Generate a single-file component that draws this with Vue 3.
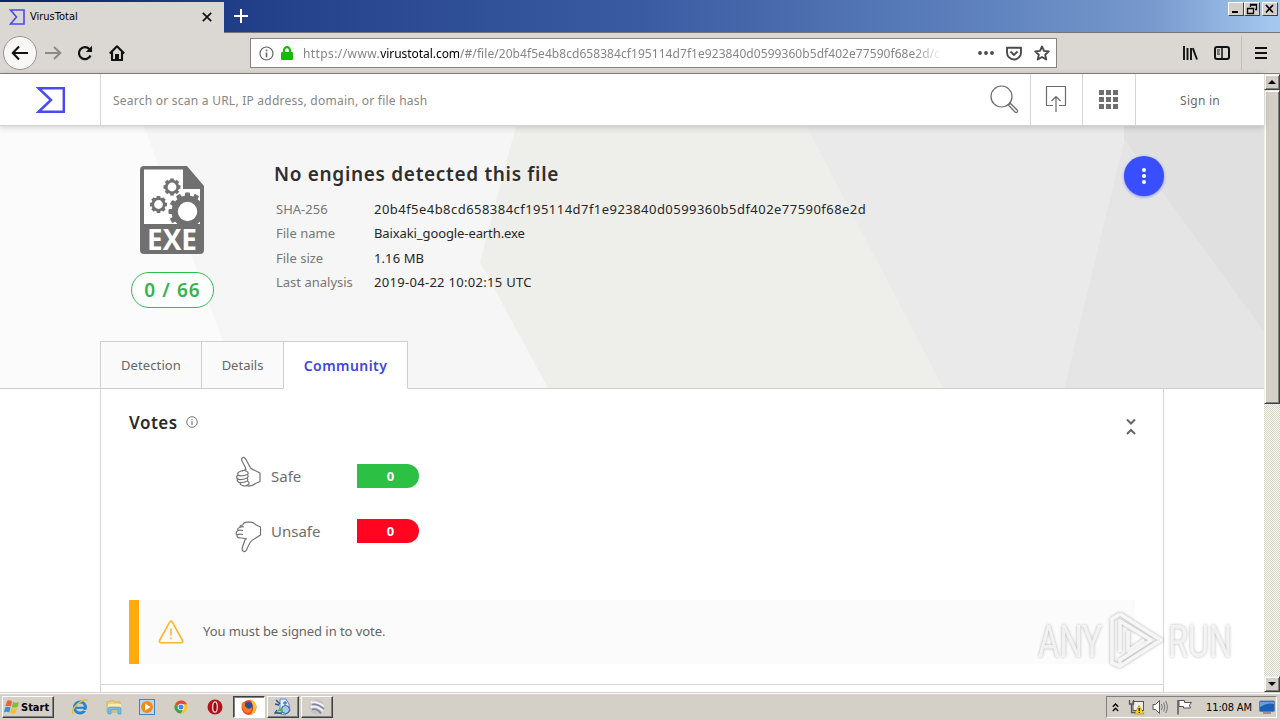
<script setup>
import { ref } from "vue";

const details = ref([
  {
    label: "SHA-256",
    value: "20b4f5e4b8cd658384cf195114d7f1e923840d0599360b5df402e77590f68e2d",
    kind: "hash",
  },
  { label: "File name", value: "Baixaki_google-earth.exe", kind: "name" },
  { label: "File size", value: "1.16 MB", kind: "size" },
  { label: "Last analysis", value: "2019-04-22 10:02:15 UTC", kind: "date" },
]);

const tabs = ref(["Detection", "Details", "Community"]);
const activeTab = ref("Community");

// teeth of the gears on the file icon
const teeth = [0, 45, 90, 135, 180, 225, 270, 315];
const bigTeeth = [0, 30, 60, 90, 120, 150, 180, 210, 240, 270, 300, 330];
const gears = [
  { x: 32, y: 21 },
  { x: 18.5, y: 38.5 },
];
</script>

<template>
  <div class="screen">
    <div class="titlebar">
      <div class="browser-tab">
        <svg class="favicon" width="16" height="16" viewBox="0 0 16 16">
          <path d="M1.5 1H15V15H1.5L7.500 8Z" fill="none" stroke="#4a4af0" stroke-width="1.6" />
        </svg>
        <span class="tab-title">VirusTotal</span>
        <svg class="tab-close" width="10" height="10" viewBox="0 0 10 10">
          <path d="M.8.8 9.200 9.200M9.200.8.8 9.200" stroke="#111" stroke-width="1.700" />
        </svg>
      </div>
      <svg class="new-tab" width="14" height="14" viewBox="0 0 14 14">
        <path d="M7 0V14M0 7H14" stroke="#fff" stroke-width="2" />
      </svg>
      <div class="win-buttons">
        <div class="win-btn"><svg width="14" height="12"><path d="M3 9H9" stroke="#000" stroke-width="2" /></svg></div>
        <div class="win-btn restore"><svg width="14" height="12"><path d="M5.500 4V1.500H11.500V6.500H10M5 2H12M2.500 5.500H8.500V10.500H2.500ZM2 5.500H9" fill="none" stroke="#000" stroke-width="1.300" /></svg></div>
        <div class="win-btn"><svg width="14" height="12"><path d="M3 2 10 9.500M10 2 3 9.500" stroke="#000" stroke-width="1.700" /></svg></div>
      </div>
    </div>

    <div class="toolbar">
      <div class="nav-back">
        <svg width="18" height="16" viewBox="0 0 18 16"><path d="M17 8H2M8 1.500 1.800 8 8 14.500" fill="none" stroke="#111" stroke-width="2.100" /></svg>
      </div>
      <svg class="nav-forward" width="17" height="14" viewBox="0 0 17 14"><path d="M0 7H15M9 1 15.300 7 9 13" fill="none" stroke="#8c8a86" stroke-width="2" /></svg>
      <svg class="nav-reload" width="16" height="16" viewBox="0 0 16 16"><path d="M13.500 10.500A6 6 0 1 1 12.500 4.200" fill="none" stroke="#111" stroke-width="2.200" /><path d="M15 .8V7H8.800Z" fill="#111" /></svg>
      <svg class="nav-home" width="16" height="16" viewBox="0 0 16 16"><path d="M.8 8.500 8 1.300 15.200 8.500M3 7V15H13V7" fill="none" stroke="#111" stroke-width="2.100" stroke-linejoin="round" /><path d="M6 9H10V15H6Z" fill="#111" /></svg>
      <div class="urlbar">
        <svg width="15" height="15" viewBox="0 0 15 15"><circle cx="7.500" cy="7.500" r="6.500" fill="none" stroke="#666" stroke-width="1.200" /><path d="M7.500 6.500V11.200M7.500 3.600V5.300" stroke="#666" stroke-width="1.600" /></svg>
        <svg class="lock" width="12" height="14" viewBox="0 0 12 14"><path d="M3 7V4.500A3 3.300 0 0 1 9 4.500V7" fill="none" stroke="#12bc00" stroke-width="2.200" /><rect x="0" y="6" width="12" height="8" rx="1.200" fill="#12bc00" /></svg>
        <span class="url"><i>https://www.</i><b>virustotal.com</b>/#/file/20b4f5e4b8cd658384cf195114d7f1e923840d0599360b5df402e77590f68e2d/c</span>
        <svg class="dots" width="16" height="4" viewBox="0 0 16 4"><circle cx="2" cy="2" r="1.900" /><circle cx="8" cy="2" r="1.900" /><circle cx="14" cy="2" r="1.900" /></svg>
        <svg class="pocket" width="16" height="15" viewBox="0 0 16 15"><path d="M1 1.800H15V6.500A7 7 0 0 1 1 6.500Z" fill="none" stroke="#4a4a4a" stroke-width="1.900" stroke-linejoin="round" /><path d="M4.500 5.500 8 9 11.500 5.500" fill="none" stroke="#4a4a4a" stroke-width="1.900" /></svg>
        <svg class="star" width="16" height="16" viewBox="0 0 16 16"><path d="M8 1.500 10 5.900 14.800 6.400 11.200 9.700 12.200 14.500 8 12 3.800 14.500 4.800 9.700 1.200 6.400 6 5.900Z" fill="none" stroke="#4a4a4a" stroke-width="1.900" stroke-linejoin="round" /></svg>
      </div>
      <svg class="library" width="15" height="14" viewBox="0 0 15 14"><path d="M1 0V14M4.500 2V14M8 2V14M9.800 2.200 14 13.500" stroke="#111" stroke-width="1.900" fill="none" /></svg>
      <svg class="sidebar-icon" width="16" height="14" viewBox="0 0 16 14"><rect x="1" y="1" width="14" height="12" rx="2" fill="none" stroke="#111" stroke-width="2" /><path d="M8 1V13" stroke="#111" stroke-width="1.500" /><path d="M3 4H6M3 6H5.500M3 8H6" stroke="#111" stroke-width="1" /></svg>
      <div class="toolbar-sep"></div>
      <svg class="menu-icon" width="12" height="12" viewBox="0 0 12 12"><path d="M0 1H12M0 6H12M0 11H12" stroke="#111" stroke-width="2" /></svg>
    </div>

    <div class="viewport">
      <div class="page">
        <header class="site-header">
          <div class="brand">
            <svg width="30" height="26" viewBox="0 0 30 26"><path d="M2.600 1.200H27.800V24.800H2.600L15 13Z" fill="none" stroke="#4a4af5" stroke-width="2.500" /></svg>
          </div>
          <div class="search">
            <span>Search or scan a URL, IP address, domain, or file hash</span>
            <svg width="29" height="29" viewBox="0 0 29 29" fill="none" stroke="#6a6a6a" stroke-width="1.200"><circle cx="11.500" cy="11.500" r="10.500" /><path d="M18.300 20 20.200 18.200 27.300 25.200Q28 26.500 27 27.200Q26 28 25 27Z" /></svg>
          </div>
          <div class="head-cell upload">
            <svg width="22" height="28" viewBox="0 0 22 28" fill="none" stroke="#6a6a6a" stroke-width="1.200"><path d="M8 20.500H1.500V1.500H20.500V20.500H14M11 27V11.500M6.500 16 11 11.500 15.500 16" /></svg>
          </div>
          <div class="head-cell apps">
            <div class="apps-grid"><i v-for="n in 9" :key="n"></i></div>
          </div>
          <div class="signin">Sign in</div>
        </header>

        <section class="hero">
          <svg class="hero-bg" width="1264" height="262" viewBox="0 0 1264 262">
            <rect width="1264" height="262" fill="#f6f6f6" />
            <path d="M0 0H144L240 262H0Z" fill="#fbfbfb" />
            <path d="M516 0H806L943 262H548L480 136Z" fill="#eeeeeb" />
            <path d="M806 0H1124V14L1064 262H943Z" fill="#eaeaea" />
            <path d="M1124 14 1264 206V262H1064Z" fill="#e5e5e5" />
            <path d="M1124 0H1264V206L1124 14Z" fill="#e0e0e0" />
          </svg>
          <div class="hero-content">
            <div class="summary">
              <div class="file-col">
                <svg class="file-icon" width="64" height="88" viewBox="0 0 64 88">
                  <path d="M4 0H47L64 20V84Q64 88 60 88H4Q0 88 0 84V4Q0 0 4 0Z" fill="#707070" />
                  <path d="M4 3.500H43V23H60V58H4Z" fill="#fff" />
                  <clipPath id="sheet"><rect x="4" y="26" width="58" height="34" /></clipPath>
                  <g clip-path="url(#sheet)" fill="#707070">
                    <g transform="translate(47.500 45.500)">
                      <circle r="16" />
                      <rect v-for="t in bigTeeth" :key="t" x="-2.500" y="-19" width="5" height="5" rx="1" :transform="`rotate(${t})`" />
                    </g>
                  </g>
                  <g v-for="g in gears" :key="g.x" :transform="`translate(${g.x} ${g.y})`">
                    <rect v-for="t in teeth" :key="t" x="-1.800" y="-8.500" width="3.600" height="4" fill="#707070" :transform="`rotate(${t})`" />
                    <circle r="5.800" fill="#fff" stroke="#707070" stroke-width="2.800" />
                  </g>
                  <circle cx="47.500" cy="45.500" r="9.700" fill="#fff" />
                  <text x="7" y="83.500" class="exe" textLength="50" lengthAdjust="spacingAndGlyphs">EXE</text>
                </svg>
                <div class="ratio">0 / 66</div>
              </div>
              <div class="info">
                <h1>No engines detected this file</h1>
                <dl>
                  <template v-for="row in details" :key="row.label">
                    <dt>{{ row.label }}</dt>
                    <dd :class="row.kind">{{ row.value }}</dd>
                  </template>
                </dl>
              </div>
              <div class="fab"><i></i><i></i><i></i></div>
            </div>
            <nav class="tabs">
              <div v-for="tab in tabs" :key="tab" class="tab" :class="[tab.toLowerCase(), { active: tab === activeTab }]">{{ tab }}</div>
            </nav>
          </div>
        </section>

        <section class="panel">
          <div class="panel-head">
            <h2>Votes</h2>
            <svg class="info-icon" width="12" height="12" viewBox="0 0 12 12"><circle cx="6" cy="6" r="5.300" fill="none" stroke="#777" /><path d="M6 5.200V9M6 3V4.200" stroke="#777" stroke-width="1.200" /></svg>
            <svg class="collapse" width="10" height="18" viewBox="0 0 10 18" fill="none" stroke="#666" stroke-width="2"><path d="M1 1.500 5 5.500 9 1.500M1 16 5 12 9 16" /></svg>
          </div>
          <div class="vote safe">
            <svg width="27" height="32" viewBox="0 0 27 32" fill="none" stroke="#737373" stroke-width="1.200" stroke-linejoin="round">
              <path d="M7 15 11 13.500Q10 10 7.500 6Q5.500 2.500 8 1.500Q9.500 1 11 3.500L15.500 12Q18 14 20 14.500L25 17V25.500L20.500 27.500Q17 30.500 12.500 30" />
              <path d="M12 15.500Q9 13.500 5 15.500Q2 16.500 3 19Q6 21 12.500 18.500Q14 16.500 12 15.500M3 19Q1 20 2 22.500Q5 25 12 22Q14 20.500 12.500 18.500M2.500 23Q1.500 25 4 26.500Q8 27 12.500 25Q13.500 23.500 12 22M5 26.800Q5 29 7.500 29.500Q11 31 14 28Q14.500 26 12.500 25" />
            </svg>
            <span class="vote-label">Safe</span>
            <span class="vote-count">0</span>
          </div>
          <div class="vote unsafe">
            <svg width="27" height="32" viewBox="0 0 27 32" fill="none" stroke="#737373" stroke-width="1.200" stroke-linejoin="round">
              <path d="M8 4Q8 1.500 12 1.200H16Q19 1.500 21 4L25.500 6V14L20 17.500Q17 19 15.500 21Q13.500 24 11.500 29Q10 31.500 8 30Q6.500 29 7.500 26L10.500 17.500 6 17Q1.500 17 2 14Q0 11.500 3 9.500Q2 7 5 6.500Q4.500 4 8 4" />
              <path d="M3 9.500Q4 8.800 8 9.500M2 14Q4 12.500 8 13.500M5 6.500Q6 5 9 6M10.500 17.500 12 18" />
            </svg>
            <span class="vote-label">Unsafe</span>
            <span class="vote-count">0</span>
          </div>
          <div class="notice">
            <svg width="26" height="24" viewBox="0 0 26 24" fill="none" stroke="#ffb42e" stroke-width="1.600" stroke-linejoin="round"><path d="M11.800 1.900Q13 .4 14.200 1.900L24.500 20.500Q25 22.500 23 22.700H3Q1 22.500 1.500 20.500Z" /><path d="M13 8.500V15.500M13 17.500V19.200" /></svg>
            <span>You must be signed in to vote.</span>
          </div>
        </section>
        <div class="next-panel"></div>
      </div>

      <div class="scrollbar">
        <div class="sb-btn"><svg width="8" height="4"><path d="M0 4 4 0 8 4Z" /></svg></div>
        <div class="sb-thumb"></div>
        <div class="sb-track"></div>
        <div class="sb-btn"><svg width="8" height="4"><path d="M0 0H8L4 4Z" /></svg></div>
      </div>
    </div>

    <div class="taskbar">
      <div class="start">
        <svg width="16" height="16" viewBox="0 0 16 16"><path d="M3 2Q6 .5 8 2.500L6.800 7.500Q4.500 6 1.500 7.200Z" fill="#e8642c" /><path d="M9 3Q11.500 4.500 15 3L13.500 8Q10.500 9.200 7.800 8Z" fill="#85b93c" /><path d="M1.300 8.200Q4 7 6.500 8.500L5.300 13.500Q3 12 0 13.200Z" fill="#3f8ed6" /><path d="M7.500 9Q10 10.300 13.200 9L11.800 14Q9 15.500 6.300 14Z" fill="#f3c02e" /></svg>
        <span>Start</span>
      </div>
      <div class="quick">
        <svg width="18" height="18" viewBox="0 0 18 18"><circle cx="9" cy="9.500" r="5.500" fill="none" stroke="#2287d6" stroke-width="3" /><path d="M5 9.800H14.500" stroke="#2287d6" stroke-width="2.200" /><path d="M11 13 17 11V13Z" fill="#d4d0c8" /><path d="M2.500 16Q-.5 13 6 6.500Q14 0 16.500 2.500" fill="none" stroke="#e9bd35" stroke-width="1.500" /></svg>
        <svg width="18" height="18" viewBox="0 0 18 18"><path d="M2 4 8 2.500 9 4H15V14H2Z" fill="#eed477" stroke="#c9a33e" stroke-width=".7" /><path d="M3 6H16V10H3Z" fill="#fbedaa" /><path d="M3 16V11Q3 9 5 9H14Q16 9 16 11V16H13V12H6V16Z" fill="#72bde8" stroke="#3a8dbd" stroke-width=".5" /></svg>
        <svg width="18" height="18" viewBox="0 0 18 18"><rect x="1.500" y="1.500" width="15" height="15" fill="#b9daf2" stroke="#3c84c4" /><circle cx="9" cy="9" r="6" fill="#f38b15" /><path d="M7 5.500 12.500 9 7 12.500Z" fill="#fff" /></svg>
        <svg width="18" height="18" viewBox="0 0 18 18"><circle cx="9" cy="9" r="6.500" fill="#f5c72c" /><path d="M3.300 6A6.500 6.500 0 0 1 15 6.300H9L7 11Z" fill="#df4a3b" /><path d="M3.200 5.900A6.500 6.500 0 0 0 9 15.500L11 11H7Z" fill="#35a353" /><circle cx="9" cy="9" r="3.300" fill="#fff" /><circle cx="9" cy="9" r="2.500" fill="#4285e8" /></svg>
        <svg width="18" height="18" viewBox="0 0 18 18"><circle cx="9" cy="9" r="7.500" fill="#b5121b" /><ellipse cx="9" cy="9" rx="2.300" ry="5.200" fill="#8c0a10" stroke="#f3dcdc" stroke-width="1.300" /></svg>
      </div>
      <div class="task active">
        <svg width="18" height="18" viewBox="0 0 18 18"><circle cx="9" cy="9.500" r="7.500" fill="#f0452b" /><path d="M10 1Q17 4 16.300 10Q15 16.500 9 17Q14 14 13 8Q12 4 10 1Z" fill="#fec32b" /><circle cx="8.500" cy="8" r="4" fill="#254e9d" /><path d="M1.600 6Q3 3 5 5Q4 8 7 10Q10 12 12 9Q12 15 7 15Q2 13 1.600 6Z" fill="#f47b20" /></svg>
      </div>
      <div class="task">
        <svg width="18" height="18" viewBox="0 0 18 18"><path d="M6 1H12L15 6 16 13 11 17 3 15 6 10Z" fill="#e6f0fb" stroke="#5d86bf" /><path d="M2 2 6 6M1 6 5 7M3 12 1 15H8" fill="none" stroke="#2b4f86" stroke-width="1.300" /><circle cx="11.500" cy="11.500" r="4" fill="#a9c8ee" stroke="#315aa0" /><path d="M9 5H13M11 3V7" stroke="#4d82cc" stroke-width="1.400" /><path d="M4 13 8 9 9 14Z" fill="#42b74a" /></svg>
      </div>
      <div class="task">
        <svg width="18" height="18" viewBox="0 0 18 18"><circle cx="9" cy="9" r="7.500" fill="#c3c4c8" /><path d="M3 4.500Q9 3 16 8.500M2.500 9Q9 7 15 13" fill="none" stroke="#f4f4f6" stroke-width="2" /><path d="M4 6.500Q10 5.500 16 11M4 11.500Q9 10 13 15.500" fill="none" stroke="#858a9b" stroke-width="1.600" /></svg>
      </div>
      <div class="tray">
        <svg class="chev" width="7" height="9" viewBox="0 0 7 9"><path d="M.8 3.800 3.500 1 6.200 3.800M.8 8 3.500 5.200 6.200 8" fill="none" stroke="#000" stroke-width="1.300" /></svg>
        <svg class="net" width="17" height="16" viewBox="0 0 17 16"><rect x="5" y="2.500" width="10.500" height="9" fill="#efefea" stroke="#555" /><path d="M1.500 1V5H5.500V1M3.500 5V13.500H8" fill="none" stroke="#555" stroke-width="1.300" /><path d="M11 6.500 16 15H6.500Z" fill="#ffd91a" stroke="#9a7b00" stroke-width=".6" /><path d="M11.200 9V12.200M11.200 13V14" stroke="#000" stroke-width="1.200" /></svg>
        <svg class="sound" width="17" height="16" viewBox="0 0 17 16"><path d="M1 5.500H3.500L7.500 1.500V14.500L3.500 10.500H1Z" fill="#fff" stroke="#555" /><path d="M9.500 5Q11 8 9.500 11M11.700 3.500Q14 8 11.700 12.500M13.700 2Q17 8 13.700 14" fill="none" stroke="#777" /></svg>
        <svg class="flag" width="17" height="16" viewBox="0 0 17 16"><path d="M2 15.500V1" stroke="#777" stroke-width="2" /><path d="M3 1.500H8.500V3.500H15.500L13.500 6 14.500 9H7.500V7.500H3Z" fill="#fff" stroke="#555" /></svg>
        <span class="clock">11:08 AM</span>
        <svg class="desk" width="16" height="14" viewBox="0 0 16 14"><rect x=".5" y="1" width="15" height="10.500" rx="1" fill="#1d5fb8" stroke="#6e7e96" /><path d="M1 7Q8 2 15 4V2H1Z" fill="#5ea0e6" /><path d="M4 13H12" stroke="#555" /></svg>
      </div>
    </div>

    <svg class="watermark" width="240" height="76" viewBox="0 0 240 76">
      <g fill="#fff" fill-opacity=".75">
        <text x="6" y="50" textLength="64" lengthAdjust="spacingAndGlyphs">ANY</text>
        <text x="136" y="50" textLength="64" lengthAdjust="spacingAndGlyphs">RUN</text>
      </g>
      <path d="M88 7 129 33 88 59V53L119 33 88 14V45M88 7 80 12V56L88 59M96 24V44L112 33" fill="none" stroke="#fff" stroke-opacity=".85" stroke-width="3.500" stroke-linejoin="round" />
    </svg>
  </div>
</template>

<style>
body {
  margin: 0;
  overflow: hidden;
}
</style>

<style scoped>
* {
  box-sizing: border-box;
}

.screen {
  position: relative;
  width: 1280px;
  height: 720px;
  display: flex;
  flex-direction: column;
  overflow: hidden;
  font-family: "Noto Sans", "Open Sans", sans-serif;
  background: #fff;
  white-space: nowrap;
}

svg {
  display: block;
  flex: none;
}

/* browser chrome */
.titlebar {
  height: 33px;
  flex: none;
  display: flex;
  background: linear-gradient(90deg, #0a246a, #22408a 20%, #3a5ba2 50%, #6084bf 78%, #7799cd 90%, #a6caf0);
  border-bottom: 1px solid #77777a;
}

.browser-tab {
  width: 224px;
  height: 31px;
  margin-top: 2px;
  background: #dbd8d3;
  display: flex;
  align-items: center;
  padding: 0 12px 2px 9px;
}

.tab-title {
  font-family: "DejaVu Sans Condensed", "DejaVu Sans", sans-serif;
  font-stretch: condensed;
  font-size: 11px;
  margin-left: 5px;
  flex: 1;
}

.new-tab {
  margin: 9px 0 0 10px;
}

.win-buttons {
  margin: 2px 2px 0 auto;
  display: flex;
}

.win-btn {
  width: 16px;
  height: 14px;
  background: #d4d0c8;
  border: 1px solid;
  border-color: #fff #404040 #404040 #fff;
}

.restore {
  margin-right: 2px;
}

.toolbar {
  height: 41px;
  flex: none;
  display: flex;
  align-items: center;
  background: #dbd8d3;
  border-bottom: 1px solid #85837f;
}

.nav-back {
  width: 34px;
  height: 34px;
  margin-left: 3px;
  border: 1px solid #999691;
  border-radius: 50%;
  background: #f8f7f5;
  display: grid;
  place-items: center;
}

.nav-forward {
  margin-left: 8px;
}

.nav-reload {
  margin-left: 15px;
}

.nav-home {
  margin-left: 16px;
}

.urlbar {
  width: 807px;
  height: 30px;
  margin-left: 125px;
  border: 1px solid #85837f;
  background: #fff;
  display: flex;
  align-items: center;
  padding-left: 8px;
}

.lock {
  margin-left: 7px;
}

.url {
  width: 640px;
  margin-left: 10px;
  overflow: hidden;
  font-size: 12px;
  letter-spacing: 0.06px;
  color: #858585;
  mask-image: linear-gradient(90deg, #000 610px, transparent);
}

.url i {
  font-style: normal;
  letter-spacing: 0.4px;
}

.url b {
  font-weight: 400;
  letter-spacing: -0.05px;
  color: #000;
}

.dots {
  margin-left: 35px;
  fill: #4a4a4a;
}

.pocket {
  margin-left: 12px;
}

.star {
  margin-left: 12px;
}

.library {
  margin-left: 126px;
}

.sidebar-icon {
  margin-left: 16px;
}

.toolbar-sep {
  width: 1px;
  height: 34px;
  margin: 0 13px 0 11px;
  background: #c3c0ba;
}

.viewport {
  height: 618px;
  flex: none;
  display: flex;
}

/* site */
.page {
  width: 1264px;
  display: flex;
  flex-direction: column;
}

.site-header {
  height: 52px;
  flex: none;
  display: flex;
  background: #fff;
  border-bottom: 1px solid #d2d2d2;
  box-shadow: 0 1px 7px rgba(0, 0, 0, 0.2);
  z-index: 1;
}

.brand {
  width: 100px;
  padding-left: 2px;
  display: grid;
  place-items: center;
}

.search {
  width: 930px;
  border-left: 1px solid #d6d6d6;
  display: flex;
  align-items: center;
  justify-content: space-between;
  padding: 0 11px 0 12px;
  font-size: 12px;
  letter-spacing: 0.24px;
  color: #868686;
}

.search span {
  padding-top: 2px;
}

.head-cell {
  border-left: 1px solid #d6d6d6;
  display: grid;
  place-items: center;
  padding-right: 2px;
}

.upload {
  width: 52px;
}

.upload svg {
  margin-top: -1px;
}

.apps {
  width: 53px;
}

.apps-grid {
  display: grid;
  grid-template-columns: repeat(3, 5px);
  gap: 2px;
}

.apps-grid i {
  width: 5px;
  height: 5px;
  background: #6e6e6e;
}

.signin {
  flex: 1;
  border-left: 1px solid #d6d6d6;
  display: grid;
  place-items: center;
  padding-top: 2px;
  font-size: 12px;
  letter-spacing: 0.25px;
  color: #6a6a6a;
}

.hero {
  height: 263px;
  flex: none;
  display: grid;
  border-bottom: 1px solid #cfcfcf;
}

.hero-bg,
.hero-content {
  grid-area: 1 / 1;
}

.hero-content {
  width: 1064px;
  height: 263px;
  margin-left: 100px;
  display: flex;
  flex-direction: column;
  justify-content: space-between;
}

.summary {
  display: flex;
  padding-left: 31px;
}

.file-col {
  width: 83px;
  padding-top: 40px;
}

.file-icon {
  margin-left: 9px;
}

.exe {
  font-family: "Open Sans", "Noto Sans", sans-serif;
  font-size: 28px;
  font-weight: 700;
  fill: #fff;
}

.ratio {
  width: 83px;
  height: 36px;
  margin-top: 18px;
  border: 1px solid #2cbe4e;
  border-radius: 18px;
  background: #fff;
  color: #36b34a;
  font-size: 19px;
  font-weight: 600;
  line-height: 35px;
  text-align: center;
  letter-spacing: 1.1px;
}

.info {
  margin-left: 60px;
  padding-top: 34px;
}

h1 {
  margin: 0;
  font-size: 19px;
  line-height: 28px;
  font-weight: 600;
  letter-spacing: 0.68px;
  color: #2e2e2e;
}

dl {
  margin: 9px 0 0 2px;
  display: grid;
  grid-template-columns: 98px auto;
  grid-auto-rows: 24.400px;
  line-height: 24.400px;
  font-size: 13px;
}

dt {
  color: #777;
}

dd {
  margin: 0;
  color: #262626;
}

.hash {
  letter-spacing: 0.46px;
}

.name {
  letter-spacing: -0.1px;
}

.size {
  letter-spacing: 0.1px;
}

.date {
  letter-spacing: 0.3px;
}

.fab {
  width: 40px;
  height: 40px;
  margin: 30px 0 0 auto;
  border-radius: 50%;
  background: #394eff;
  box-shadow: 0 1px 3px rgba(57, 78, 255, 0.6);
  display: flex;
  flex-direction: column;
  align-items: center;
  justify-content: center;
  gap: 2px;
}

.fab i {
  width: 4px;
  height: 4px;
  border-radius: 50%;
  background: #fff;
}

.tabs {
  display: flex;
}

.tab {
  height: 48px;
  border: 1px solid #cfcfcf;
  border-right: 0;
  background: #fafafa;
  font-size: 13px;
  line-height: 47px;
  text-align: center;
  color: #666;
}

.detection {
  width: 101px;
  letter-spacing: 0.1px;
}

.details {
  width: 82px;
}

.community {
  width: 125px;
}

.tab.active {
  border-right: 1px solid #cfcfcf;
  border-bottom-color: #fff;
  background: #fff;
  color: #3d46dd;
  font-size: 14px;
  font-weight: 600;
  letter-spacing: 0.45px;
}

.panel {
  width: 1064px;
  height: 296px;
  flex: none;
  margin-left: 100px;
  border: 1px solid #d6d6d6;
  border-top: 0;
  padding: 0 28px;
}

.panel-head {
  height: 60px;
  display: flex;
  padding-top: 20px;
}

h2 {
  margin: 0;
  font-size: 17px;
  line-height: 28px;
  font-weight: 600;
  letter-spacing: 0.5px;
  color: #2a2a2a;
}

.info-icon {
  margin: 7px 0 0 8px;
}

.collapse {
  margin: 9px 0 0 auto;
  margin-right: -1px;
}

.vote {
  height: 55px;
  display: flex;
  align-items: center;
  padding: 0 0 1px 106px;
}

.vote-label {
  width: 86px;
  margin: -1px 0 0 9px;
  font-size: 15px;
  color: #6e6e6e;
}

.vote svg {
  margin-top: -8px;
}

.unsafe svg {
  margin-top: 11px;
}

.vote-count {
  width: 62px;
  height: 24px;
  border-radius: 0 12px 12px 0;
  padding-left: 5px;
  color: #fff;
  font-size: 13px;
  font-weight: 700;
  line-height: 24px;
  text-align: center;
}

.safe .vote-count {
  background: #2cc045;
}

.unsafe .vote-count {
  background: #ff0520;
}

.notice {
  height: 64px;
  margin-top: 41px;
  border-left: 10px solid #ffab0a;
  background: #fbfbfb;
  display: flex;
  align-items: center;
  gap: 19px;
  padding: 0 0 2px 19px;
  font-size: 13px;
  letter-spacing: -0.06px;
  color: #666;
}

.notice svg {
  margin-top: 2px;
}

.next-panel {
  width: 1064px;
  flex: 1;
  margin-left: 100px;
  border: solid #d6d6d6;
  border-width: 0 1px;
}

.scrollbar {
  width: 16px;
  display: flex;
  flex-direction: column;
}

.sb-btn,
.sb-thumb {
  background: #d4d0c8;
  border: 1px solid;
  border-color: #f1efe9 #404040 #404040 #f1efe9;
  box-shadow: inset 1px 1px #fff, inset -1px -1px #808080;
}

.sb-btn {
  height: 16px;
  flex: none;
  display: grid;
  place-items: center;
}

.sb-thumb {
  height: 314px;
  flex: none;
}

.sb-track {
  flex: 1;
  background: repeating-conic-gradient(#fff 0 25%, #d4d0c8 0 50%) 0 0 / 2px 2px;
}

/* windows taskbar */
.taskbar {
  height: 28px;
  flex: none;
  display: flex;
  background: #d4d0c8;
  border-top: 1px solid #d4d0c8;
  box-shadow: inset 0 1px #fff;
  padding: 3px 3px 2px 2px;
}

.start,
.task {
  height: 22px;
  border: 1px solid;
  border-color: #fff #404040 #404040 #fff;
  box-shadow: inset -1px -1px #808080;
  display: flex;
  align-items: center;
}

.start {
  width: 52px;
  font: 700 11px "DejaVu Sans Condensed", "DejaVu Sans", sans-serif;
  font-stretch: condensed;
  gap: 1px;
  padding-left: 1px;
}

.quick {
  display: flex;
  align-items: center;
  gap: 15.700px;
  margin: 0 9px 0 17px;
}

.task {
  width: 32px;
  margin-right: 2px;
  justify-content: center;
}

.task.active {
  background: #fff;
  border-color: #404040 #fff #fff #404040;
  box-shadow: inset 1px 1px #808080;
}

.tray {
  width: 171px;
  height: 22px;
  margin-left: auto;
  border: 1px solid;
  border-color: #808080 #fff #fff #808080;
  display: flex;
  align-items: center;
  padding-left: 5px;
}

.net {
  margin-left: 9px;
}

.sound,
.flag {
  margin-left: 7px;
}

.clock {
  width: 60px;
  margin-left: 6px;
  text-align: center;
  font-family: "DejaVu Sans Condensed", "DejaVu Sans", sans-serif;
  font-stretch: condensed;
  font-size: 11px;
  letter-spacing: -0.15px;
}

/* floats above the page and the scrollbar */
.watermark {
  position: absolute;
  left: 1032px;
  top: 607px;
  filter: drop-shadow(0 0 1.500px rgba(0, 0, 0, 0.38));
}

.watermark text {
  font-family: Roboto, sans-serif;
  font-size: 44px;
}
</style>
